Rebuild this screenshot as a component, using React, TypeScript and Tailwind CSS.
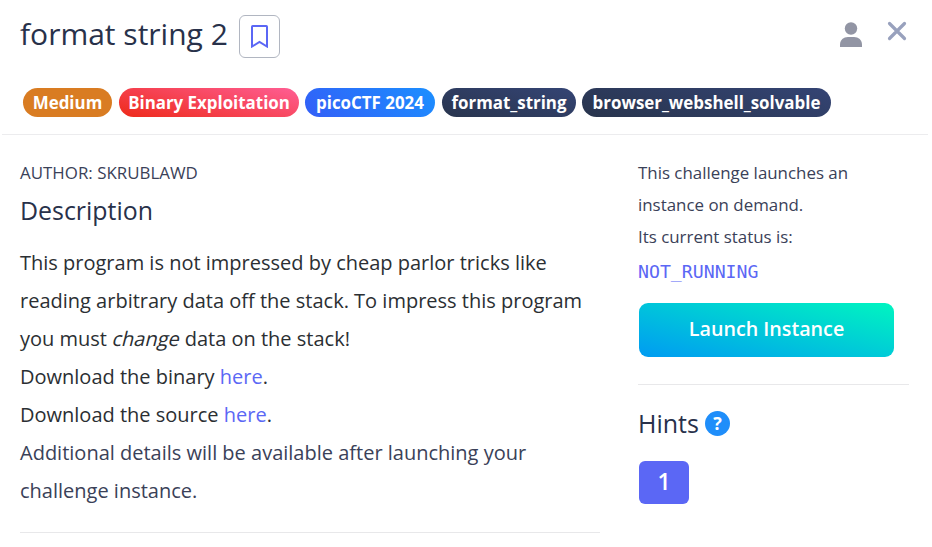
import type { ReactNode } from 'react';

function Badge({ className, children }: { className: string; children: ReactNode }) {
  return (
    <span className={`flex h-[29px] items-center justify-center rounded-full text-[16.9px] font-bold whitespace-nowrap text-white ${className}`}>
      {children}
    </span>
  );
}

function Header() {
  return (
    <header className="ml-[2px] mr-1 h-[135px] border-b border-[#ececee] pl-[18px]">
      <div className="flex h-[88px] items-start">
        <h1 className="mt-[13px] w-[219px] text-[30px] leading-[42px] font-normal whitespace-nowrap text-[#28314a]">format string 2</h1>
        <button className="mt-[15px] flex h-[43px] w-[41px] items-center justify-center rounded-[6px] border border-[#b1b6c1]">
          <svg width="17" height="23" viewBox="0 0 17 23" fill="none" stroke="#5b67f5" strokeWidth="2">
            <path d="M1 1.7Q1 1 1.7 1H15.3Q16 1 16 1.7V21.500L8.5 17L1 21.500Z" />
          </svg>
        </button>
        <svg className="mt-[22px] ml-[560px]" width="22" height="26" viewBox="0 0 22 26" fill="#9295a4">
          <circle cx="11" cy="6.5" r="6.2" />
          <path d="M0 25V22.5C0 18 3.5 15 8 15H14C18.500 15 22 18 22 22.500V25Z" />
        </svg>
        <svg className="mt-[21px] ml-[25px]" width="20" height="20" viewBox="0 0 20 20" stroke="#98a1bd" strokeWidth="3.2" strokeLinecap="round">
          <path d="M2.500 2.500L17.500 17.500M17.500 2.500L2.500 17.500" />
        </svg>
      </div>
      <div className="ml-[3px] flex">
        <Badge className="w-[89px] bg-[#d97c22]">Medium</Badge>
        <Badge className="ml-[7px] w-[180px] bg-linear-[14deg,#ee2a1a,#ff5e94]">Binary Exploitation</Badge>
        <Badge className="ml-[6px] w-[130px] bg-linear-[45deg,#335ef7,#1b8fff]">picoCTF 2024</Badge>
        <Badge className="ml-[7px] w-[134px] bg-linear-[14deg,#29354e,#344474]">format_string</Badge>
        <Badge className="ml-[6px] w-[249px] bg-linear-[14deg,#28344c,#344474]">browser_webshell_solvable</Badge>
      </div>
    </header>
  );
}

export default function App() {
  return (
    <div className="h-[547px] w-[932px] overflow-hidden bg-white font-['Open_Sans',sans-serif] text-[#3a4158]">
      <Header />
      <div className="flex">
        <main className="ml-5 w-[580px] border-b border-[#e8e8ea] pt-[22px] pb-[22px]">
          <div className="text-[16.9px] leading-8">AUTHOR: SKRUBLAWD</div>
          <h2 className="mt-[2px] mb-[15px] text-[24.9px] leading-[38px] font-normal text-[#28314a]">Description</h2>
          <div className="text-[20px] leading-[38px] whitespace-nowrap text-[#2b2f33]">
            <p>This program is not impressed by cheap parlor tricks like<br />reading arbitrary data off the stack. To impress this program<br />you must <em className="inline-block translate-x-px -skew-x-[14deg] not-italic">change</em> data on the stack!</p>
            <p>Download the binary <a className="text-[#5b67f5]">here</a>.</p>
            <p>Download the source <a className="text-[#5b67f5]">here</a>.</p>
            <p className="text-[#3a4158]">Additional details will be available after launching your<br />challenge instance.</p>
          </div>
        </main>
        <aside className="ml-[38px] w-[271px] pt-[22px]">
          <p className="text-[16.9px] leading-8 whitespace-nowrap">This challenge launches an<br />instance on demand.<br />Its current status is:</p>
          <div className="mt-[2px] h-[48px] font-['DejaVu_Sans_Mono',monospace] text-[18.200px] leading-[34px] text-[#5b67f5]">NOT_RUNNING</div>
          <button className="ml-px flex h-[54px] w-[255px] items-center justify-center rounded-[9px] bg-linear-[14deg,#009bf2,#00f5c0] pb-[3px] text-[19.7px] font-[630] text-white">Launch Instance</button>
          <div className="mt-[27px] flex items-center border-t border-[#e8e8ea] pt-[19px]">
            <h2 className="w-[67px] text-[25px] leading-[38px] font-normal text-[#28314a]">Hints</h2>
            <span className="mt-px flex size-[25px] items-center justify-center rounded-full bg-[#1f8efa] pb-px text-[18px] leading-none font-bold text-white">?</span>
          </div>
          <button className="mt-[19px] ml-px flex h-[43px] w-[50px] items-center justify-center rounded-[6px] bg-[#5b67f5] pb-[2px] text-[23px] font-semibold text-white">1</button>
        </aside>
      </div>
    </div>
  );
}
